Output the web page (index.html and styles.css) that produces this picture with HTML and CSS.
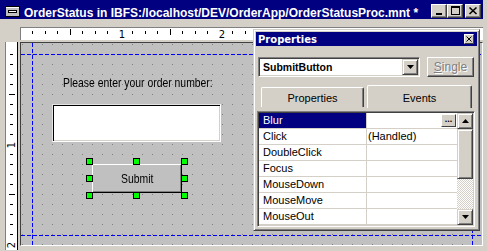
FILE: index.html
```html
<!DOCTYPE html>
<html lang="en">
<head>
    <title>OrderStatus</title>
    <meta charset="UTF-8">
    <link rel="stylesheet" href="styles.css">
</head>
<body>
    <div class="window">
        <div class="titlebar">
            <svg class="app-icon" viewBox="0 0 15 11" xmlns="http://www.w3.org/2000/svg">
                <rect x="0.5" y="0.5" width="14" height="10" fill="#c0c0c0" stroke="#000"></rect>
                <rect x="1" y="1" width="13" height="1" fill="#fff"></rect>
                <rect x="3" y="4" width="9" height="3" fill="#000"></rect>
                <rect x="4" y="5" width="7" height="1" fill="#fff"></rect>
            </svg>
            <span class="title-text">OrderStatus in IBFS:/localhost/DEV/OrderApp/OrderStatusProc.mnt *</span>
            <div class="caption-buttons">
                <div class="cap-btn">
                    <svg viewBox="0 0 12 10"><rect x="3" y="7" width="6" height="2"></rect></svg>
                </div>
                <div class="cap-btn">
                    <svg viewBox="0 0 12 10"><path d="M2 0h9v9h-9z M3 2v6h7v-6z" fill-rule="evenodd"></path></svg>
                </div>
                <div class="cap-btn close">
                    <svg viewBox="0 0 12 10"><path d="M2.5 1.5l7 6.5M9.5 1.5l-7 6.5" stroke="#000" stroke-width="1.6"></path></svg>
                </div>
            </div>
        </div>

        <div class="designer">
            <svg class="ruler-h" viewBox="0 0 463 13" xmlns="http://www.w3.org/2000/svg">
                <rect x="0" y="0" width="463" height="13" fill="#fff"></rect>
                <path d="M0 0.5h463M0.5 0v13" stroke="#808080"></path>
                <path d="M12.5 4v3M25.5 4v3M37.5 4v3M50.5 2v6M62.5 4v3M75.5 4v3M87.5 4v3M112.5 4v3M125.5 4v3M137.5 4v3M150.5 2v6M162.5 4v3M175.5 4v3M187.5 4v3M212.5 4v3M225.5 4v3" stroke="#000"></path>
                <text x="102" y="10.5" class="ruler-num" text-anchor="middle">1</text>
                <text x="202" y="10.5" class="ruler-num" text-anchor="middle">2</text>
            </svg>

            <svg class="ruler-v" viewBox="0 0 13 208" xmlns="http://www.w3.org/2000/svg">
                <rect x="0" y="0" width="13" height="208" fill="#fff"></rect>
                <path d="M0.5 0v208" stroke="#808080"></path>
                <path d="M12.5 0v208" stroke="#000"></path>
                <path d="M5 12.5h3M5 22.5h3M5 32.5h3M5 42.5h3M4 52.5h6M5 62.5h3M5 72.5h3M5 82.5h3M5 92.5h3M5 112.5h3M5 122.5h3M5 132.5h3M5 142.5h3M4 152.5h6M5 162.5h3M5 172.5h3M5 182.5h3M5 192.5h3" stroke="#000"></path>
                <text class="ruler-num" text-anchor="middle" transform="translate(10 103) rotate(-90)">1</text>
                <text class="ruler-num" text-anchor="middle" transform="translate(10 203) rotate(-90)">2</text>
            </svg>

            <div class="canvas">
                <svg class="canvas-bg" viewBox="0 0 461 202" xmlns="http://www.w3.org/2000/svg">
                    <defs>
                        <pattern id="dots" width="10" height="10" patternUnits="userSpaceOnUse">
                            <rect x="1" y="1" width="1" height="1" fill="#808080"></rect>
                        </pattern>
                    </defs>
                    <rect width="461" height="202" fill="url(#dots)"></rect>
                    <path d="M0 11.5h461M0 192.5h461M11.5 0v202M451.5 0v202" stroke="#0000ff" stroke-dasharray="4 2"></path>
                </svg>

                <div class="ctl-label">Please enter your order number:</div>
                <div class="ctl-textbox"></div>
                <div class="ctl-button"><span>Submit</span></div>

                <div class="selection">
                    <span class="handle h-tl"></span>
                    <span class="handle h-tc"></span>
                    <span class="handle h-tr"></span>
                    <span class="handle h-ml"></span>
                    <span class="handle h-mr"></span>
                    <span class="handle h-bl"></span>
                    <span class="handle h-bc"></span>
                    <span class="handle h-br"></span>
                </div>
            </div>
        </div>

        <!-- floating tool window -->
        <div class="props">
            <div class="props-title">
                <span>Properties</span>
                <div class="tool-close">
                    <svg viewBox="0 0 8 8"><path d="M1.5 1.5l5 5M6.5 1.5l-5 5" stroke="#000"></path></svg>
                </div>
            </div>

            <div class="props-body">
                <div class="props-top">
                    <div class="combo">
                        <span class="combo-text">SubmitButton</span>
                        <div class="combo-arrow">
                            <svg viewBox="0 0 7 4"><path d="M0 0h7l-3.5 4z"></path></svg>
                        </div>
                    </div>
                    <div class="btn-single"><u>S</u>ingle</div>
                </div>

                <div class="tabs">
                    <div class="tab">Properties</div>
                    <div class="tab active">Events</div>
                </div>

                <div class="grid">
                    <div class="rows">
                        <div class="row selected">
                            <div class="cell name">Blur</div>
                            <div class="cell value"><span class="ellipsis">...</span></div>
                        </div>
                        <div class="row">
                            <div class="cell name">Click</div>
                            <div class="cell value">(Handled)</div>
                        </div>
                        <div class="row">
                            <div class="cell name">DoubleClick</div>
                            <div class="cell value"></div>
                        </div>
                        <div class="row">
                            <div class="cell name">Focus</div>
                            <div class="cell value"></div>
                        </div>
                        <div class="row">
                            <div class="cell name">MouseDown</div>
                            <div class="cell value"></div>
                        </div>
                        <div class="row">
                            <div class="cell name">MouseMove</div>
                            <div class="cell value"></div>
                        </div>
                        <div class="row">
                            <div class="cell name">MouseOut</div>
                            <div class="cell value"></div>
                        </div>
                    </div>
                    <div class="vscroll">
                        <div class="sb-btn">
                            <svg viewBox="0 0 7 4"><path d="M3.5 0l3.5 4h-7z"></path></svg>
                        </div>
                        <div class="sb-thumb"></div>
                        <div class="sb-track"></div>
                        <div class="sb-btn">
                            <svg viewBox="0 0 7 4"><path d="M0 0h7l-3.5 4z"></path></svg>
                        </div>
                    </div>
                </div>
            </div>
        </div>
    </div>
</body>
</html>
```

FILE: styles.css
```css
:root {
    --face: #d4d0c8;
    --shadow: #808080;
    --dark: #404040;
    --caption: #000080;
    --canvas: #c0c0c0;
}

* {
    margin: 0;
    padding: 0;
    box-sizing: border-box;
}

body {
    background: var(--face);
    font-family: "Liberation Sans", Arial, sans-serif;
    font-size: 11px;
    color: #000;
    overflow: hidden;
}

.window {
    position: relative;
    width: 487px;
    height: 251px;
    padding-right: 4px;
    background: var(--face);
    overflow: hidden;
}

/* Title bar */
.titlebar {
    display: flex;
    align-items: flex-start;
    height: 19px;
    background: var(--caption);
    color: #fff;
}

.app-icon {
    width: 15px;
    height: 11px;
    margin: 6px 0 0 5px;
}

.title-text {
    margin: 6px 0 0 4px;
    font-weight: bold;
    font-size: 12px;
    line-height: 14px;
    white-space: nowrap;
}

.caption-buttons {
    display: flex;
    margin: 4px 2px 0 auto;
}

.cap-btn {
    width: 16px;
    height: 14px;
    display: flex;
    align-items: center;
    justify-content: center;
    background: var(--face);
    border: 1px solid;
    border-color: #fff var(--dark) var(--dark) #fff;
    box-shadow: inset -1px -1px var(--shadow);
}

.cap-btn svg {
    width: 12px;
    height: 10px;
    fill: #000;
}

.cap-btn.close {
    margin-left: 2px;
}

/* Designer area */
.designer {
    display: grid;
    grid-template-columns: 13px 1fr;
    grid-template-rows: 13px 208px;
    column-gap: 2px;
    row-gap: 2px;
    padding: 8px 0 0 5px;
}

.ruler-h {
    grid-column: 2;
    grid-row: 1;
    display: block;
    width: 463px;
    height: 13px;
}

.ruler-v {
    grid-column: 1;
    grid-row: 2;
    display: block;
    width: 13px;
    height: 208px;
}

.ruler-num {
    font-family: "DejaVu Sans", sans-serif;
    font-size: 10px;
    fill: #000;
}

.canvas {
    grid-column: 2;
    grid-row: 2;
    position: relative;
    height: 204px;
    background: var(--canvas);
    border: 1px solid;
    border-color: var(--dark) #fff #fff var(--dark);
}

.canvas-bg {
    position: absolute;
    left: 0;
    top: 0;
    width: 461px;
    height: 202px;
}

/* the designer draws its controls in a narrow face */
.ctl-label {
    position: absolute;
    left: 42px;
    top: 32px;
    font-size: 13px;
    line-height: 15px;
    white-space: nowrap;
    transform: scaleX(0.8);
    transform-origin: 0 0;
}

.ctl-textbox {
    position: absolute;
    left: 31px;
    top: 61px;
    width: 169px;
    height: 38px;
    background: #fff;
    border: 1px solid;
    border-color: #e4e4e4 #fff #fff #e4e4e4;
    box-shadow: inset 1px 1px #000, inset -1px -1px var(--face);
}

.ctl-button {
    position: absolute;
    left: 71px;
    top: 121px;
    width: 90px;
    height: 29px;
    display: flex;
    align-items: center;
    justify-content: center;
    background: var(--canvas);
    border: 1px solid;
    border-color: #fff #000 #000 #fff;
    box-shadow: inset -1px -1px var(--shadow);
    font-size: 13px;
}

.ctl-button span {
    display: inline-block;
    transform: scaleX(0.8);
}

.selection {
    position: absolute;
    left: 65px;
    top: 115px;
    width: 102px;
    height: 41px;
}

.handle {
    position: absolute;
    width: 7px;
    height: 7px;
    background: #00ff00;
    border: 1px solid #000;
}

.h-tl { left: 0; top: 0; }
.h-tc { left: 47px; top: 0; }
.h-tr { right: 0; top: 0; }
.h-ml { left: 0; top: 17px; }
.h-mr { right: 0; top: 17px; }
.h-bl { left: 0; bottom: 0; }
.h-bc { left: 47px; bottom: 0; }
.h-br { right: 0; bottom: 0; }

/* Properties tool window */
.props {
    position: absolute;
    left: 253px;
    top: 29px;
    width: 227px;
    height: 202px;
    display: flex;
    flex-direction: column;
    padding: 2px;
    background: var(--face);
    border: 1px solid;
    border-color: var(--face) var(--dark) var(--dark) var(--face);
    box-shadow: inset 1px 1px #fff, inset -1px -1px var(--shadow);
}

.props-title {
    display: flex;
    align-items: center;
    height: 14px;
    padding-left: 2px;
    background: var(--caption);
    color: #fff;
    font-family: "DejaVu Sans", sans-serif;
    font-weight: bold;
    font-size: 10px;
}

.tool-close {
    width: 10px;
    height: 10px;
    margin: 0 3px 0 auto;
    display: flex;
    align-items: center;
    justify-content: center;
    background: var(--face);
    border: 1px solid;
    border-color: #fff var(--dark) var(--dark) #fff;
}

.tool-close svg {
    width: 8px;
    height: 8px;
}

.props-body {
    display: flex;
    flex-direction: column;
    padding-top: 11px;
}

.props-top {
    display: flex;
    gap: 7px;
    margin-left: 2px;
}

.combo {
    display: flex;
    align-items: center;
    width: 162px;
    height: 20px;
    padding: 1px;
    background: #fff;
    border: 1px solid;
    border-color: var(--shadow) #fff #fff var(--shadow);
    box-shadow: inset 1px 1px var(--dark), inset -1px -1px var(--face);
}

.combo-text {
    flex: 1;
    padding-left: 3px;
    font-weight: bold;
    font-size: 10.5px;
}

.combo-arrow {
    width: 16px;
    height: 16px;
    display: flex;
    align-items: center;
    justify-content: center;
    background: var(--face);
    border: 1px solid;
    border-color: var(--face) var(--dark) var(--dark) var(--face);
    box-shadow: inset 1px 1px #fff, inset -1px -1px var(--shadow);
}

.combo-arrow svg,
.sb-btn svg {
    width: 7px;
    height: 4px;
    fill: #000;
}

.btn-single {
    width: 47px;
    height: 20px;
    display: flex;
    align-items: center;
    justify-content: center;
    border: 1px solid;
    border-color: #fff var(--dark) var(--dark) #fff;
    box-shadow: inset -1px -1px var(--shadow);
    color: var(--shadow);
    text-shadow: 1px 1px #fff;
    font-size: 12px;
}

.tabs {
    display: flex;
    align-items: flex-start;
    gap: 3px;
    margin: 8px 0 0 5px;
}

.tab {
    width: 103px;
    height: 20px;
    margin-top: 2px;
    padding-top: 4px;
    text-align: center;
    font-size: 11px;
    border-top: 1px solid #fff;
    border-left: 1px solid #fff;
    border-right: 1px solid var(--dark);
    border-radius: 2px 2px 0 0;
    box-shadow: inset -1px 0 var(--shadow);
}

.tab.active {
    width: 105px;
    height: 23px;
    margin-top: 0;
    padding-top: 6px;
}

.grid {
    display: flex;
    width: 218px;
    height: 116px;
    margin: 3px 0 0 1px;
    padding: 1px;
    border: 1px solid;
    border-color: var(--shadow) #fff #fff var(--shadow);
    box-shadow: inset 1px 1px var(--dark), inset -1px -1px var(--face);
}

.rows {
    flex: 1;
    background: #fff;
}

.row {
    display: flex;
    height: 16px;
    border-bottom: 1px solid var(--face);
}

.cell {
    line-height: 15px;
    white-space: nowrap;
}

.cell.name {
    width: 108px;
    padding-left: 4px;
    border-right: 1px solid var(--face);
}

.cell.value {
    flex: 1;
    display: flex;
    justify-content: flex-start;
    align-items: flex-start;
    padding-left: 1px;
}

.row.selected .cell.value {
    justify-content: flex-end;
}

.row.selected .cell.name {
    background: var(--caption);
    color: #fff;
}

.ellipsis {
    width: 15px;
    height: 13px;
    margin: 1px 1px 0 0;
    background: var(--face);
    border: 1px solid;
    border-color: #fff var(--dark) var(--dark) #fff;
    font-weight: bold;
    font-size: 9px;
    line-height: 8px;
    text-align: center;
}

.vscroll {
    width: 16px;
    display: flex;
    flex-direction: column;
}

.sb-btn,
.sb-thumb {
    background: var(--face);
    border: 1px solid;
    border-color: var(--face) var(--dark) var(--dark) var(--face);
    box-shadow: inset 1px 1px #fff, inset -1px -1px var(--shadow);
}

.sb-btn {
    height: 16px;
    display: flex;
    align-items: center;
    justify-content: center;
}

.sb-thumb {
    height: 50px;
}

.sb-track {
    flex: 1;
    background-image: conic-gradient(#fff 25%, var(--face) 0 50%, #fff 0 75%, var(--face) 0);
    background-size: 2px 2px;
}
```
